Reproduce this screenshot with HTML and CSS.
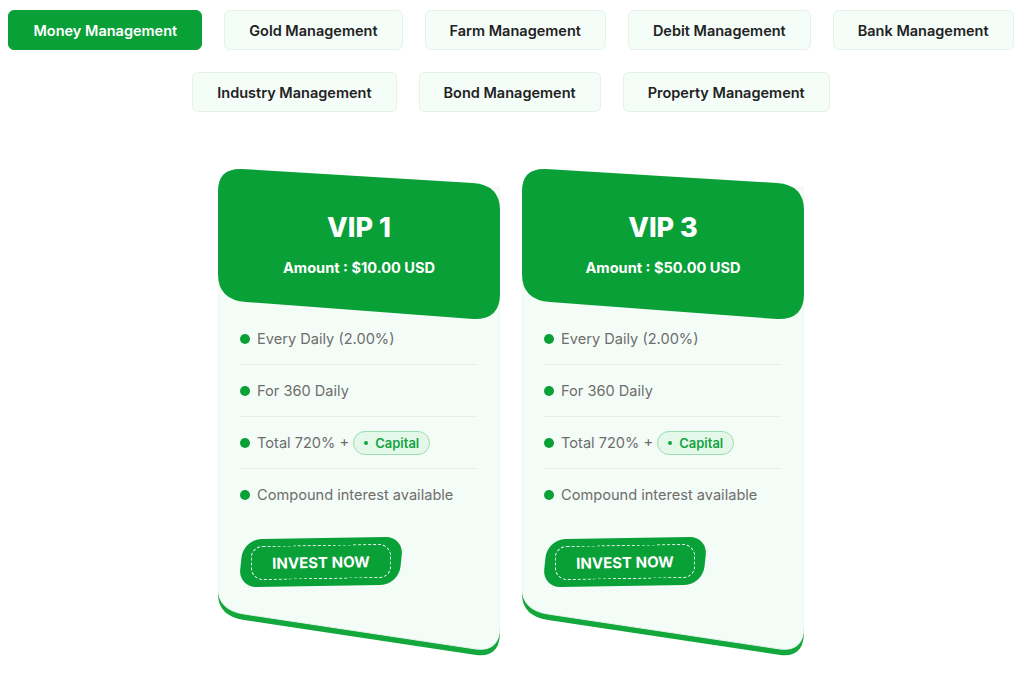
FILE: index.html
```html
<html>
    <head>
        <link rel="stylesheet" href="styles.css">
    </head>
    <body>
        <div class="page">
            <div class="tabs">
                <button class="tab active">Money Management</button>
                <button class="tab">Gold Management</button>
                <button class="tab">Farm Management</button>
                <button class="tab">Debit Management</button>
                <button class="tab">Bank Management</button>
                <button class="tab">Industry Management</button>
                <button class="tab">Bond Management</button>
                <button class="tab">Property Management</button>
            </div>

            <div class="plans">
                <div class="plan-card">
                    <svg class="plan-shape" width="282" height="490" viewBox="0 0 282 490">
                        <path class="shape-shadow" d="M0,26 V426 Q0,448 26,452 L258,487 Q282,490 282,464 V26 Z"/>
                        <path class="shape-body" d="M0,20 V420 Q0,442 26,446 L258,481 Q282,484 282,458 V20 Z"/>
                        <path class="shape-head" d="M0,23 Q0,0 24,1 L255,15 Q282,17 282,42 V126 Q282,152 255,151 L28,134 Q0,132 0,106 Z"/>
                    </svg>
                    <div class="plan-head">
                        <div class="plan-name">VIP 1</div>
                        <div class="plan-amount">Amount : $10.00 USD</div>
                    </div>
                    <ul class="plan-features">
                        <li><span class="dot"></span>Every Daily (2.00%)</li>
                        <li><span class="dot"></span>For 360 Daily</li>
                        <li><span class="dot"></span>Total 720% + <span class="capital"><span class="capital-dot"></span>Capital</span></li>
                        <li><span class="dot"></span>Compound interest available</li>
                    </ul>
                    <button class="invest"><span class="invest-inner">INVEST NOW</span></button>
                </div>

                <div class="plan-card">
                    <svg class="plan-shape" width="282" height="490" viewBox="0 0 282 490">
                        <path class="shape-shadow" d="M0,26 V426 Q0,448 26,452 L258,487 Q282,490 282,464 V26 Z"/>
                        <path class="shape-body" d="M0,20 V420 Q0,442 26,446 L258,481 Q282,484 282,458 V20 Z"/>
                        <path class="shape-head" d="M0,23 Q0,0 24,1 L255,15 Q282,17 282,42 V126 Q282,152 255,151 L28,134 Q0,132 0,106 Z"/>
                    </svg>
                    <div class="plan-head">
                        <div class="plan-name">VIP 3</div>
                        <div class="plan-amount">Amount : $50.00 USD</div>
                    </div>
                    <ul class="plan-features">
                        <li><span class="dot"></span>Every Daily (2.00%)</li>
                        <li><span class="dot"></span>For 360 Daily</li>
                        <li><span class="dot"></span>Total 720% + <span class="capital"><span class="capital-dot"></span>Capital</span></li>
                        <li><span class="dot"></span>Compound interest available</li>
                    </ul>
                    <button class="invest"><span class="invest-inner">INVEST NOW</span></button>
                </div>
            </div>
        </div>
    </body>
</html>
```

FILE: styles.css
```css
body {
  margin: 0;
  background: #fff;
  font-family: Inter, "Liberation Sans", sans-serif;
}

.page {
  width: 1006px;
  margin-left: 8px;
  padding-top: 10px;
}

.tabs {
  display: flex;
  flex-wrap: wrap;
  justify-content: center;
  gap: 22px;
}

.tab {
  height: 40px;
  padding: 0 24px;
  font-family: Inter, "Liberation Sans", sans-serif;
  font-size: 14.5px;
  font-weight: 600;
  color: #222;
  background: #f5fdf9;
  border: 1px solid #e4f2ea;
  border-radius: 6px;
}

.tab.active {
  color: #fff;
  background: #0aa038;
  border-color: #0aa038;
}

.plans {
  display: flex;
  justify-content: center;
  gap: 22px;
  margin-top: 56px;
}

.plan-card {
  position: relative;
  width: 282px;
  height: 490px;
}

.plan-shape {
  position: absolute;
  left: 0;
  top: 0;
}

.shape-head {
  fill: #0aa038;
}

.shape-body {
  fill: #f4fcf7;
  stroke: #e8f3ec;
  stroke-width: 1;
}

.shape-shadow {
  fill: #12a83b;
}

.plan-head {
  position: relative;
  height: 134px;
  display: flex;
  flex-flow: column;
  align-items: center;
  padding-top: 42px;
  box-sizing: border-box;
  color: #fff;
}

.plan-name {
  font-size: 27px;
  font-weight: 800;
  line-height: 36px;
}

.plan-amount {
  margin-top: 11px;
  font-size: 14.6px;
  font-weight: 700;
  line-height: 22px;
}

.plan-features {
  position: relative;
  list-style: none;
  margin: 11px 0 0;
  padding: 0 23px 0 22px;
}

.plan-features li {
  display: flex;
  align-items: center;
  height: 51px;
  font-size: 14.6px;
  color: #6d6d6d;
  border-bottom: 1px solid #e6efe9;
}

.plan-features li:last-child {
  border-bottom: none;
}

.dot {
  width: 10px;
  height: 10px;
  border-radius: 50%;
  background: #0aa038;
  margin-right: 7px;
}

.capital {
  display: flex;
  align-items: center;
  height: 22px;
  margin-left: 4px;
  padding: 0 10px;
  font-size: 13px;
  font-weight: 600;
  color: #14a23f;
  background: #e4f8ea;
  border: 1px solid #9ddcb0;
  border-radius: 12px;
}

.capital-dot {
  width: 4px;
  height: 4px;
  border-radius: 50%;
  background: #14a23f;
  margin-right: 7px;
}

.invest {
  position: relative;
  display: block;
  margin: 18px 0 0 23px;
  width: 160px;
  height: 48px;
  padding: 7px 10px;
  background: #0aa038;
  border: none;
  border-radius: 18px;
  transform: skewX(-7deg) rotate(-1deg);
}

.invest-inner {
  display: flex;
  align-items: center;
  justify-content: center;
  height: 100%;
  font-family: Inter, "Liberation Sans", sans-serif;
  font-size: 15px;
  font-weight: 700;
  color: #fff;
  border: 1.5px dashed #fff;
  border-radius: 12px;
  box-sizing: border-box;
  transform: skewX(7deg);
}
```
